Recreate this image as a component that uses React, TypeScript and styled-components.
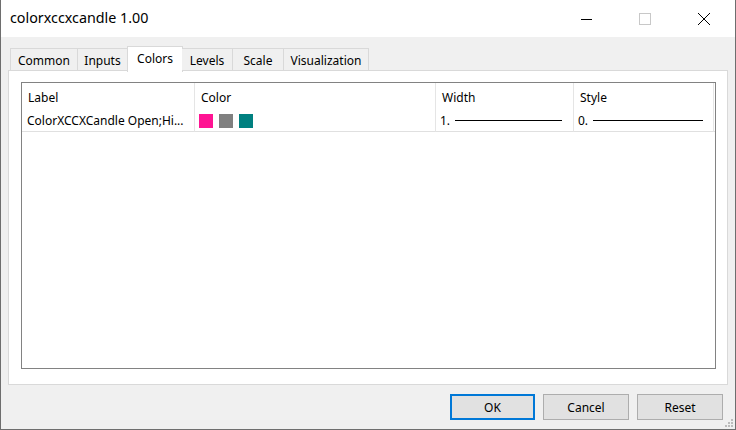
import React from "react";
import styled, { createGlobalStyle } from "styled-components";

const Global = createGlobalStyle`
  html, body { margin: 0; padding: 0; background: #ffffff; }
  * { box-sizing: border-box; }
`;

const FONT = `"Noto Sans", "Open Sans", sans-serif`;

const Window = styled.div`
  width: 736px;
  height: 430px;
  display: flex;
  flex-direction: column;
  border-left: 1px solid #6e6e6e;
  border-right: 1px solid #6e6e6e;
  border-bottom: 1px solid #6e6e6e;
  background: #f0f0f0;
  font-family: ${FONT};
  font-size: 12px;
  color: #000;
  position: relative;
  overflow: hidden;
`;

const TitleBar = styled.div`
  height: 37px;
  background: #ffffff;
  display: flex;
  align-items: center;
  justify-content: space-between;
  padding-left: 9px;
  flex-shrink: 0;
`;

const Title = styled.div`
  font-size: 14.3px;
  padding-bottom: 2px;
`;

const Controls = styled.div`
  display: flex;
  height: 100%;
  padding-right: 2px;
`;

const CtrlButton = styled.div`
  width: 58.5px;
  height: 100%;
  display: flex;
  align-items: center;
  justify-content: center;
  color: #000;
`;

const Body = styled.div`
  flex: 1;
  display: flex;
  flex-direction: column;
  padding: 9px 7px 9px 7px;
`;

const TabStrip = styled.div`
  display: flex;
  align-items: flex-end;
  height: 25px;
  padding-left: 2px;
  position: relative;
  z-index: 1;
`;

const Tab = styled.div<{ $active?: boolean; $w: number }>`
  width: ${(p) => p.$w}px;
  height: ${(p) => (p.$active ? 26 : 23)}px;
  margin-bottom: ${(p) => (p.$active ? -1 : 0)}px;
  margin-left: ${(p) => (p.$active ? -1 : 0)}px;
  margin-right: ${(p) => (p.$active ? -1 : 0)}px;
  background: ${(p) => (p.$active ? "#ffffff" : "#f0f0f0")};
  border: 1px solid #d9d9d9;
  border-bottom: ${(p) => (p.$active ? "none" : "1px solid #d9d9d9")};
  border-left: ${(p) => (p.$active ? "1px solid #d9d9d9" : "none")};
  display: flex;
  align-items: ${(p) => (p.$active ? "flex-start" : "center")};
  padding-top: ${(p) => (p.$active ? 3 : 1)}px;
  justify-content: center;
  font-size: 12px;
  &:first-child { border-left: 1px solid #d9d9d9; }
`;

const Panel = styled.div`
  flex: 1;
  background: #ffffff;
  border: 1px solid #d9d9d9;
  margin-top: -1px;
  padding: 11px 11px 15px 12px;
  display: flex;
  min-width: 0;
`;

const ListView = styled.div`
  flex: 1;
  min-width: 0;
  border: 1px solid #828282;
  background: #ffffff;
`;

const Grid = styled.div`
  display: grid;
  grid-template-columns: 173px 241px 138px 140px minmax(0, 1fr);
`;

const HeadCell = styled.div<{ $last?: boolean }>`
  height: 26px;
  border-right: ${(p) => (p.$last ? "none" : "1px solid #e5e5e5")};
  display: flex;
  align-items: center;
  padding-left: ${(p) => (p.$last ? 0 : 6)}px;
  padding-top: 2px;
`;

const Cell = styled.div<{ $last?: boolean }>`
  height: 23px;
  border-right: ${(p) => (p.$last ? "none" : "1px solid #e5e5e5")};
  border-bottom: 1px solid #e0e0e0;
  display: flex;
  align-items: center;
  padding-left: ${(p) => (p.$last ? 0 : 5)}px;
  padding-top: 1px;
  white-space: nowrap;
  overflow: hidden;
`;

const Swatches = styled.div`
  display: flex;
  gap: 6px;
  margin-left: -1px;
`;

const Swatch = styled.div<{ $c: string }>`
  width: 14px;
  height: 14px;
  background: ${(p) => p.$c};
`;

const LineValue = styled.div<{ $len: number }>`
  display: flex;
  align-items: center;
  gap: 5px;
  margin-left: -1px;
  &::after {
    content: "";
    display: block;
    width: ${(p) => p.$len}px;
    height: 1px;
    background: #000;
  }
`;

const Footer = styled.div`
  display: flex;
  justify-content: flex-end;
  gap: 8px;
  padding-top: 9px;
  padding-right: 5px;
`;

const Button = styled.div<{ $primary?: boolean }>`
  width: ${(p) => (p.$primary ? 85 : 86)}px;
  height: 26px;
  background: #e1e1e1;
  border: ${(p) => (p.$primary ? "2px solid #0078d7" : "1px solid #adadad")};
  display: flex;
  align-items: center;
  justify-content: center;
  font-size: 12px;
`;

const Grip = styled.svg`
  position: absolute;
  right: 1px;
  bottom: 1px;
`;

export default function App() {
  const tabs: [string, number][] = [
    ["Common", 68],
    ["Inputs", 50],
    ["Colors", 56],
    ["Levels", 51],
    ["Scale", 51],
    ["Visualization", 85],
  ];
  return (
    <>
      <Global />
      <Window>
        <TitleBar>
          <Title>colorxccxcandle 1.00</Title>
          <Controls>
            <CtrlButton>
              <svg width="12" height="12" viewBox="0 0 12 12">
                <line x1="0" y1="6.5" x2="11" y2="6.5" stroke="#000" strokeWidth="1" />
              </svg>
            </CtrlButton>
            <CtrlButton>
              <svg width="12" height="12" viewBox="0 0 12 12">
                <rect x="0.5" y="0.5" width="11" height="11" fill="none" stroke="#c8c8c8" strokeWidth="1" />
              </svg>
            </CtrlButton>
            <CtrlButton>
              <svg width="14" height="14" viewBox="0 0 14 14">
                <path d="M1 1 L13 13 M13 1 L1 13" stroke="#000" strokeWidth="1" />
              </svg>
            </CtrlButton>
          </Controls>
        </TitleBar>
        <Body>
          <TabStrip>
            {tabs.map(([t, w]) => (
              <Tab key={t} $w={w} $active={t === "Colors"}>
                {t}
              </Tab>
            ))}
          </TabStrip>
          <Panel>
            <ListView>
              <Grid>
                <HeadCell>Label</HeadCell>
                <HeadCell>Color</HeadCell>
                <HeadCell>Width</HeadCell>
                <HeadCell>Style</HeadCell>
                <HeadCell $last />
                <Cell>ColorXCCXCandle Open;Hi...</Cell>
                <Cell>
                  <Swatches>
                    <Swatch $c="#ff1493" />
                    <Swatch $c="#808080" />
                    <Swatch $c="#008080" />
                  </Swatches>
                </Cell>
                <Cell>
                  <LineValue $len={107}>1.</LineValue>
                </Cell>
                <Cell>
                  <LineValue $len={110}>0.</LineValue>
                </Cell>
                <Cell $last />
              </Grid>
            </ListView>
          </Panel>
          <Footer>
            <Button $primary>OK</Button>
            <Button>Cancel</Button>
            <Button>Reset</Button>
          </Footer>
        </Body>
        <Grip width="10" height="10" viewBox="0 0 10 10">
          {[
            [7, 1],
            [7, 4],
            [4, 4],
            [7, 7],
            [4, 7],
            [1, 7],
          ].map(([x, y], i) => (
            <rect key={i} x={x} y={y} width="2" height="2" fill="#bcbcbc" />
          ))}
        </Grip>
      </Window>
    </>
  );
}
